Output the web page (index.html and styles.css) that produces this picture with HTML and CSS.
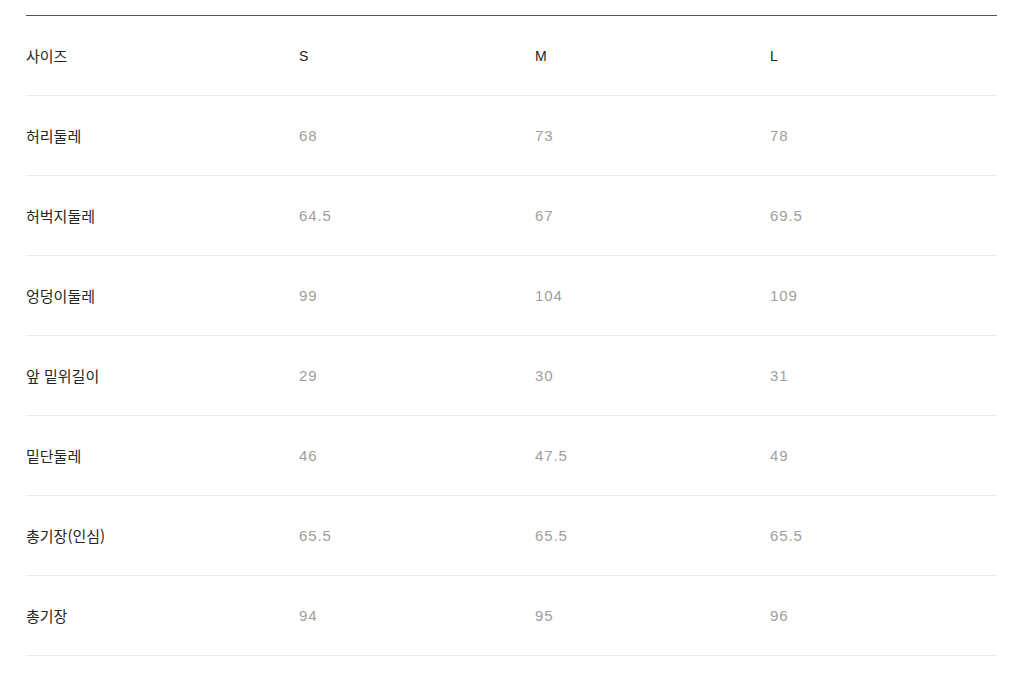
FILE: index.html
```html
<!DOCTYPE html>
<html lang="ko">
<head>
<meta charset="utf-8">
<title>사이즈</title>
<link rel="stylesheet" href="styles.css">
</head>
<body>
<div class="size-table">
  <div class="row head">
    <div class="cell label">사이즈</div>
    <div class="cell">S</div>
    <div class="cell">M</div>
    <div class="cell">L</div>
  </div>
  <div class="row">
    <div class="cell label">허리둘레</div>
    <div class="cell val">68</div>
    <div class="cell val">73</div>
    <div class="cell val">78</div>
  </div>
  <div class="row">
    <div class="cell label">허벅지둘레</div>
    <div class="cell val">64.5</div>
    <div class="cell val">67</div>
    <div class="cell val">69.5</div>
  </div>
  <div class="row">
    <div class="cell label">엉덩이둘레</div>
    <div class="cell val">99</div>
    <div class="cell val">104</div>
    <div class="cell val">109</div>
  </div>
  <div class="row">
    <div class="cell label">앞 밑위길이</div>
    <div class="cell val">29</div>
    <div class="cell val">30</div>
    <div class="cell val">31</div>
  </div>
  <div class="row">
    <div class="cell label">밑단둘레</div>
    <div class="cell val">46</div>
    <div class="cell val">47.5</div>
    <div class="cell val">49</div>
  </div>
  <div class="row">
    <div class="cell label">총기장(인심)</div>
    <div class="cell val">65.5</div>
    <div class="cell val">65.5</div>
    <div class="cell val">65.5</div>
  </div>
  <div class="row">
    <div class="cell label">총기장</div>
    <div class="cell val">94</div>
    <div class="cell val">95</div>
    <div class="cell val">96</div>
  </div>
</div>
</body>
</html>
```
FILE: styles.css
```css
html, body {
  margin: 0;
  padding: 0;
  background: #ffffff;
}
body {
  font-family: "Liberation Sans", "Noto Sans CJK KR", sans-serif;
  font-size: 14px;
  color: #222;
}
.size-table {
  margin: 15px 22px 0 26px;
  width: 971px;
  border-top: 1px solid #555;
}
.row {
  display: grid;
  grid-template-columns: 273px 236px 235px 1fr;
  align-items: center;
  height: 79px;
  border-bottom: 1px solid #ececec;
}
.cell {
  line-height: 20px;
}
.head .cell {
  color: #222;
  font-size: 14px;
}
.head .label,
.label {
  color: #262626;
  font-family: "Noto Sans CJK KR", "Liberation Sans", sans-serif;
  font-size: 15px;
}
.val {
  color: #9e9e9e;
  font-size: 15px;
  letter-spacing: 0.9px;
}
```
